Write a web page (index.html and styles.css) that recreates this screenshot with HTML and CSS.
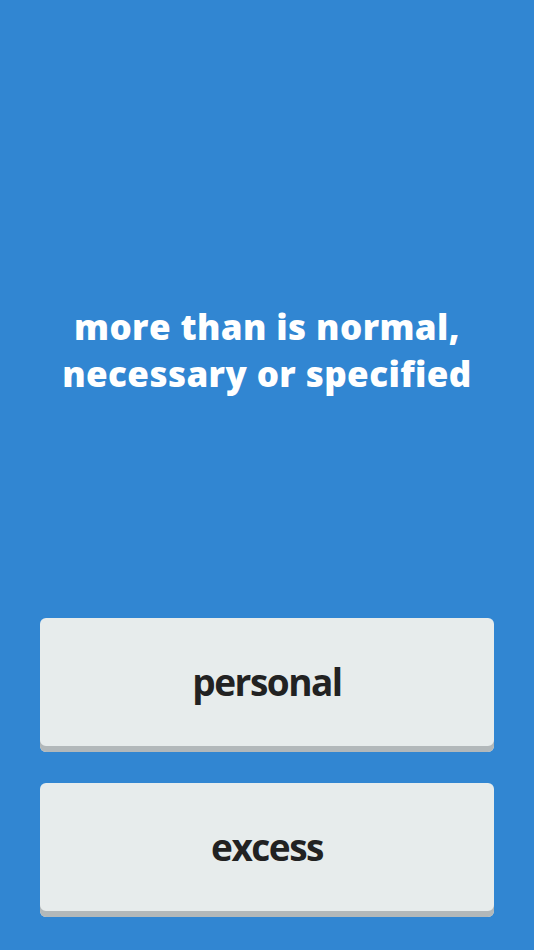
FILE: index.html
```html
<!DOCTYPE html>
<html lang="en">
<head>
<meta charset="utf-8">
<link rel="stylesheet" href="styles.css">
</head>
<body>
<div class="screen">
  <div class="prompt">
    <h1 class="question">more than is normal,<br>necessary or specified</h1>
  </div>
  <div class="answers">
    <button class="answer">personal</button>
    <button class="answer">excess</button>
  </div>
</div>
</body>
</html>
```
FILE: styles.css
```css
html, body {
  margin: 0;
  padding: 0;
}
body {
  background: #3186d2;
  font-family: "Open Sans", sans-serif;
}
.screen {
  height: 950px;
  display: flex;
  flex-direction: column;
  box-sizing: border-box;
}
.prompt {
  flex: 1;
  padding-top: 303px;
}
.question {
  margin: 0;
  color: #ffffff;
  font-family: "Open Sans", sans-serif;
  font-weight: 800;
  font-size: 35px;
  line-height: 47px;
  letter-spacing: 0.4px;
  text-align: center;
}
.answers {
  display: flex;
  flex-direction: column;
  gap: 31px;
  padding: 0 40px 33px;
}
.answer {
  height: 134px;
  border: none;
  border-radius: 6px;
  background: #e7ecec;
  box-shadow: inset 0 -6px 0 #b2b8ba;
  padding: 0 0 8px;
  color: #222222;
  font-family: "Open Sans", sans-serif;
  font-weight: 700;
  font-size: 37px;
  letter-spacing: -1.5px;
  cursor: pointer;
}
```
